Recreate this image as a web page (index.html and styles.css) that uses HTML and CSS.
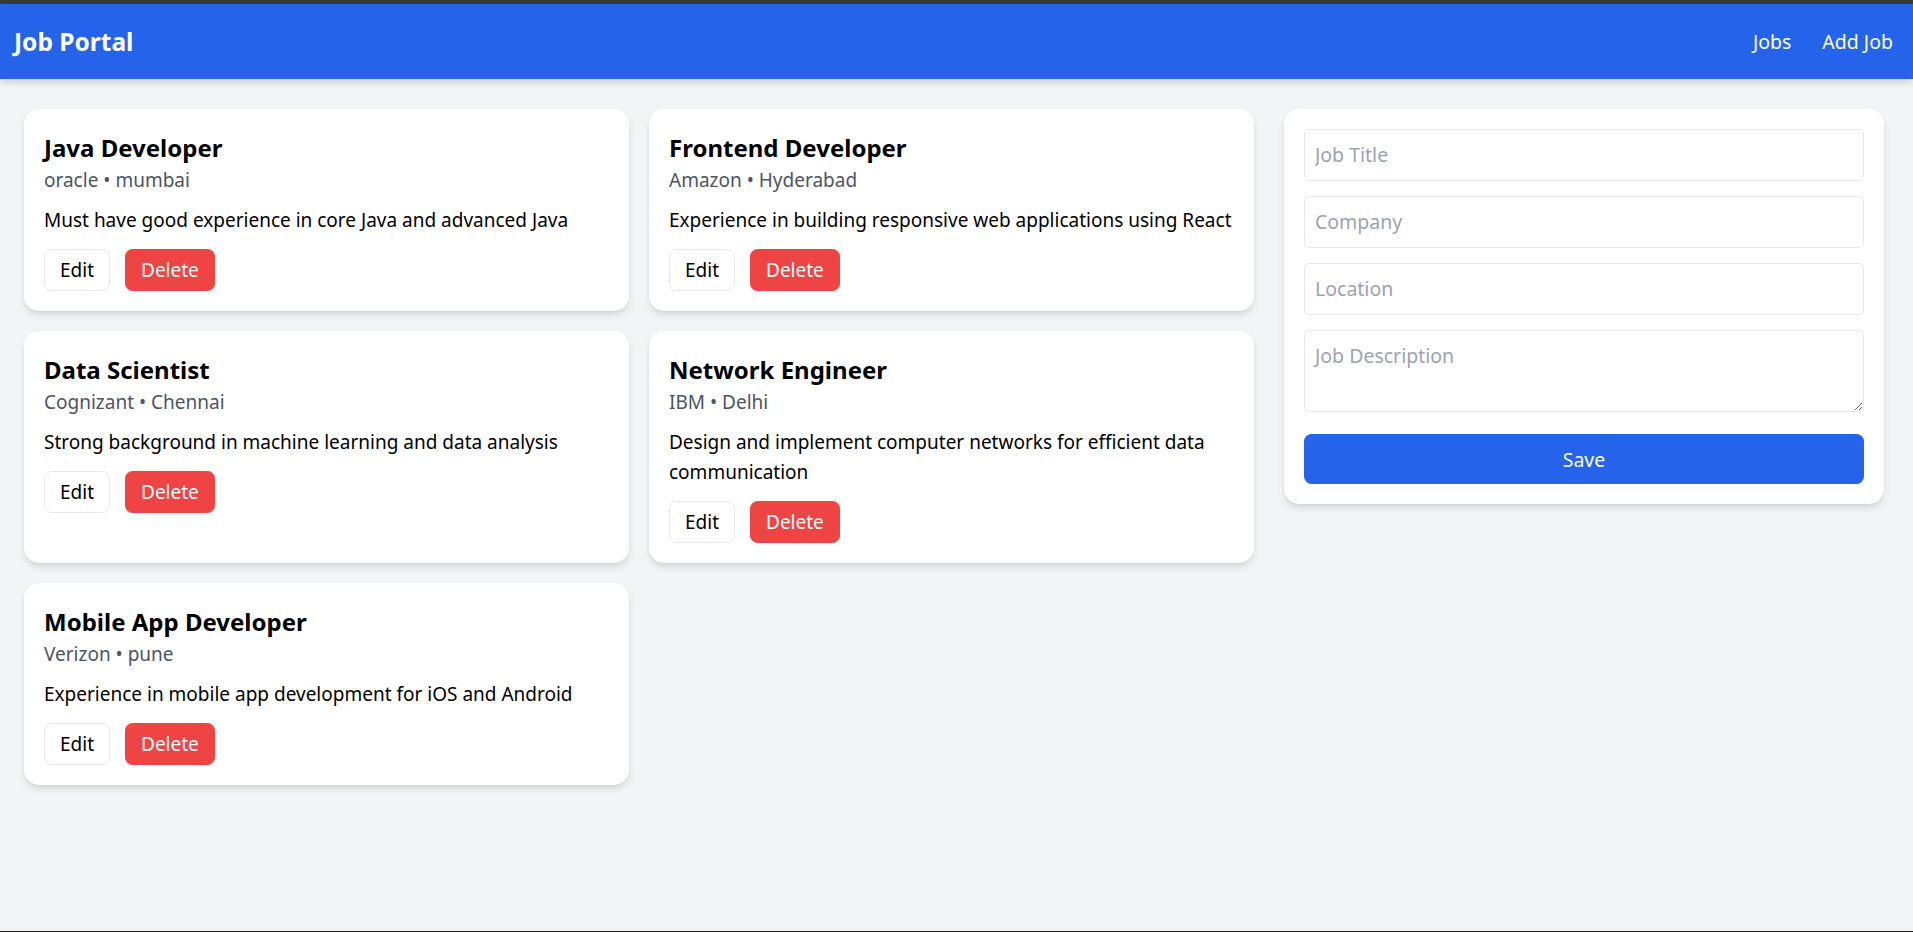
FILE: index.html
```html
<!DOCTYPE html>
<html lang="en">
<head>
<meta charset="utf-8">
<title>Job Portal</title>
<link rel="stylesheet" href="styles.css">
</head>
<body>
<div class="frame">
  <header class="topbar">
    <div class="brand">Job Portal</div>
    <nav class="nav">
      <a class="nav-link">Jobs</a>
      <a class="nav-link">Add Job</a>
    </nav>
  </header>
  <main class="layout">
    <section class="jobs">
      <article class="card">
        <h2 class="job-title">Java Developer</h2>
        <p class="job-meta">oracle • mumbai</p>
        <p class="job-desc">Must have good experience in core Java and advanced Java</p>
        <div class="actions"><button class="btn btn-edit">Edit</button><button class="btn btn-delete">Delete</button></div>
      </article>
      <article class="card">
        <h2 class="job-title">Frontend Developer</h2>
        <p class="job-meta">Amazon • Hyderabad</p>
        <p class="job-desc">Experience in building responsive web applications using React</p>
        <div class="actions"><button class="btn btn-edit">Edit</button><button class="btn btn-delete">Delete</button></div>
      </article>
      <article class="card">
        <h2 class="job-title">Data Scientist</h2>
        <p class="job-meta">Cognizant • Chennai</p>
        <p class="job-desc">Strong background in machine learning and data analysis</p>
        <div class="actions"><button class="btn btn-edit">Edit</button><button class="btn btn-delete">Delete</button></div>
      </article>
      <article class="card">
        <h2 class="job-title">Network Engineer</h2>
        <p class="job-meta">IBM • Delhi</p>
        <p class="job-desc">Design and implement computer networks for efficient data communication</p>
        <div class="actions"><button class="btn btn-edit">Edit</button><button class="btn btn-delete">Delete</button></div>
      </article>
      <article class="card">
        <h2 class="job-title">Mobile App Developer</h2>
        <p class="job-meta">Verizon • pune</p>
        <p class="job-desc">Experience in mobile app development for iOS and Android</p>
        <div class="actions"><button class="btn btn-edit">Edit</button><button class="btn btn-delete">Delete</button></div>
      </article>
    </section>
    <form class="card form-card">
      <input class="field" type="text" placeholder="Job Title">
      <input class="field" type="text" placeholder="Company">
      <input class="field" type="text" placeholder="Location">
      <textarea class="field field-area" rows="2" placeholder="Job Description"></textarea>
      <button class="btn-save" type="button">Save</button>
    </form>
  </main>
</div>
</body>
</html>
```
FILE: styles.css
```css
* { box-sizing: border-box; }
html, body { margin: 0; padding: 0; }
body {
  font-family: "Noto Sans", "Open Sans", sans-serif;
  font-size: 19px;
  line-height: 30px;
  background: #f3f4f6;
  color: #000;
}
.frame {
  min-height: 100vh;
  border-top: 4px solid #3a3a3a;
  border-bottom: 1px solid #202020;
  background: #f3f4f6;
}
.topbar {
  height: 75px;
  background: #2563eb;
  color: #fff;
  display: flex;
  align-items: center;
  justify-content: space-between;
  padding: 0 20px 0 14px;
  box-shadow: 0 5px 8px -1px rgba(0,0,0,0.12), 0 2px 5px -2px rgba(0,0,0,0.1);
  position: relative;
}
.brand { font-size: 24.5px; font-weight: 700; line-height: 35px; }
.nav { display: flex; gap: 31px; }
.nav-link { color: #fff; font-size: 19.5px; }
.layout {
  display: grid;
  grid-template-columns: repeat(3, 1fr);
  gap: 30px;
  padding: 30px 29px 30px 24px;
  align-items: start;
}
.jobs {
  grid-column: span 2;
  display: grid;
  grid-template-columns: 1fr 1fr;
  gap: 20px;
}
.card {
  background: #fff;
  border-radius: 15px;
  padding: 20px;
  box-shadow: 0 5px 8px -1px rgba(0,0,0,0.1), 0 2px 5px -2px rgba(0,0,0,0.1);
}
.job-title { margin: 0; padding-top: 1px; font-size: 24px; line-height: 35px; font-weight: 700; }
.job-meta { margin: 0; color: #4b5563; }
.job-desc { margin: 10px 0 0; }
.actions { display: flex; gap: 15px; margin-top: 14px; }
.btn {
  font-family: inherit;
  font-size: 19px;
  line-height: 30px;
  padding: 5px 15px;
  border-radius: 7.5px;
  cursor: pointer;
}
.btn-edit { background: #fff; color: #000; border: 1px solid #e5e7eb; }
.btn-delete { background: #ef4444; color: #fff; border: 1px solid #ef4444; }
.form-card { display: flex; flex-direction: column; }
.field {
  display: block;
  width: 100%;
  font-family: inherit;
  font-size: 19.5px;
  line-height: 30px;
  padding: 10px;
  border: 1px solid #e5e7eb;
  border-radius: 5px;
  margin: 0 0 15px;
  color: #000;
  background: #fff;
  outline: none;
}
.field::placeholder { color: #9ca3af; }
.field-area { height: 82px; margin-bottom: 22px; }
.btn-save {
  width: 100%;
  height: 50px;
  border: none;
  border-radius: 7.5px;
  background: #2563eb;
  color: #fff;
  font-family: inherit;
  font-size: 19.5px;
  cursor: pointer;
}
```
